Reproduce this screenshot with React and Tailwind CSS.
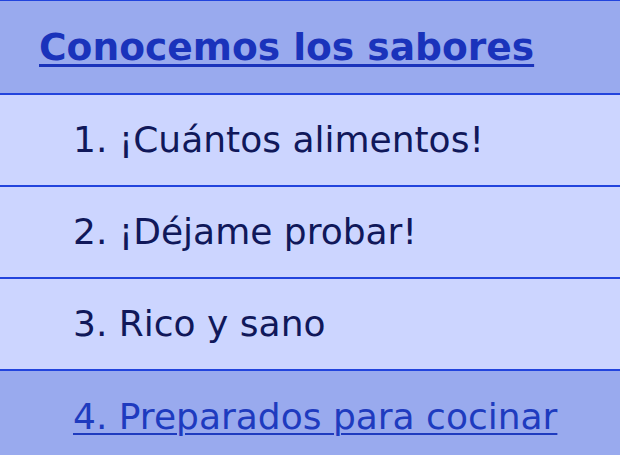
const items = [
  { n: 1, label: '¡Cuántos alimentos!' },
  { n: 2, label: '¡Déjame probar!' },
  { n: 3, label: 'Rico y sano' },
];

export default function App() {
  return (
    <div
      className="w-[620px] h-[455px] overflow-hidden bg-[#ccd5ff]"
      style={{ fontFamily: '"DejaVu Sans", Verdana, sans-serif' }}
    >
      <div className="h-[95px] flex items-center pl-[39px] bg-[#99aaee] border-t border-b-2 border-[#2244dd]">
        <a href="#" className="text-[37.6px] font-bold text-[#1a33bb] underline underline-offset-[4px] decoration-[3px]">
          Conocemos los sabores
        </a>
      </div>
      <ul>
        {items.map((it) => (
          <li
            key={it.n}
            className="h-[92px] flex items-center pl-[73px] border-b-2 border-[#2244dd] text-[36px] text-[#10185a]"
          >
            {it.n}. {it.label}
          </li>
        ))}
        <li className="h-[92px] flex items-center pl-[73px] bg-[#99aaee] text-[36px]">
          <a href="#" className="text-[#1e3bbf] underline underline-offset-[4px] decoration-2">
            4. Preparados para cocinar
          </a>
        </li>
      </ul>
    </div>
  );
}
